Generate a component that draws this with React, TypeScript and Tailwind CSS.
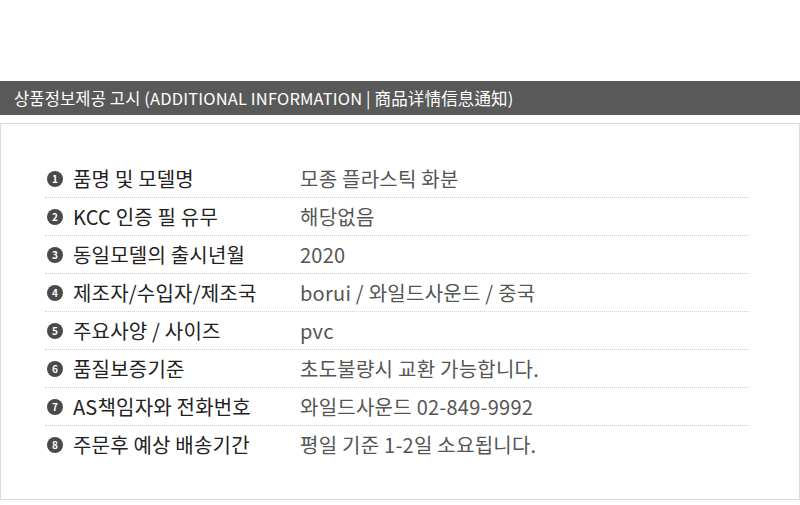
import React from "react";

const rows: [string, string][] = [
  ["품명 및 모델명", "모종 플라스틱 화분"],
  ["KCC 인증 필 유무", "해당없음"],
  ["동일모델의 출시년월", "2020"],
  ["제조자/수입자/제조국", "borui / 와일드사운드 / 중국"],
  ["주요사양 / 사이즈", "pvc"],
  ["품질보증기준", "초도불량시 교환 가능합니다."],
  ["AS책임자와 전화번호", "와일드사운드 02-849-9992"],
  ["주문후 예상 배송기간", "평일 기준 1-2일 소요됩니다."],
];

const font = { fontFamily: '"Noto Sans CJK KR", "Noto Sans", sans-serif' };

export default function App() {
  return (
    <div className="w-[800px] h-[505px] bg-white overflow-hidden" style={font}>
      <div className="h-[81px]" />
      <div className="h-[34px] bg-[#595959] flex items-center pl-[14px] text-white text-[16.5px] tracking-[0.15px]">
        상품정보제공 고시 (ADDITIONAL INFORMATION | 商品详情信息通知)
      </div>
      <div className="mt-[8px] h-[377px] border border-[#dcdcdc] pt-[36px] pl-[44px] pr-[50px]">
        {rows.map(([k, v], i) => (
          <div
            key={i}
            className={
              "h-[38px] flex items-center " +
              (i < rows.length - 1 ? "border-b border-dotted border-[#cfcfcf]" : "")
            }
          >
            <div className="w-[255px] flex items-center">
              <span className="ml-[2px] w-[16px] h-[16px] rounded-full bg-[#4a4a4a] text-white text-[10px] font-bold flex items-center justify-center leading-none">
                {i + 1}
              </span>
              <span className="ml-[10px] text-[20px] tracking-[0.2px] text-[#222]">{k}</span>
            </div>
            <span className="text-[20px] tracking-[0.25px] text-[#555]">{v}</span>
          </div>
        ))}
      </div>
    </div>
  );
}
